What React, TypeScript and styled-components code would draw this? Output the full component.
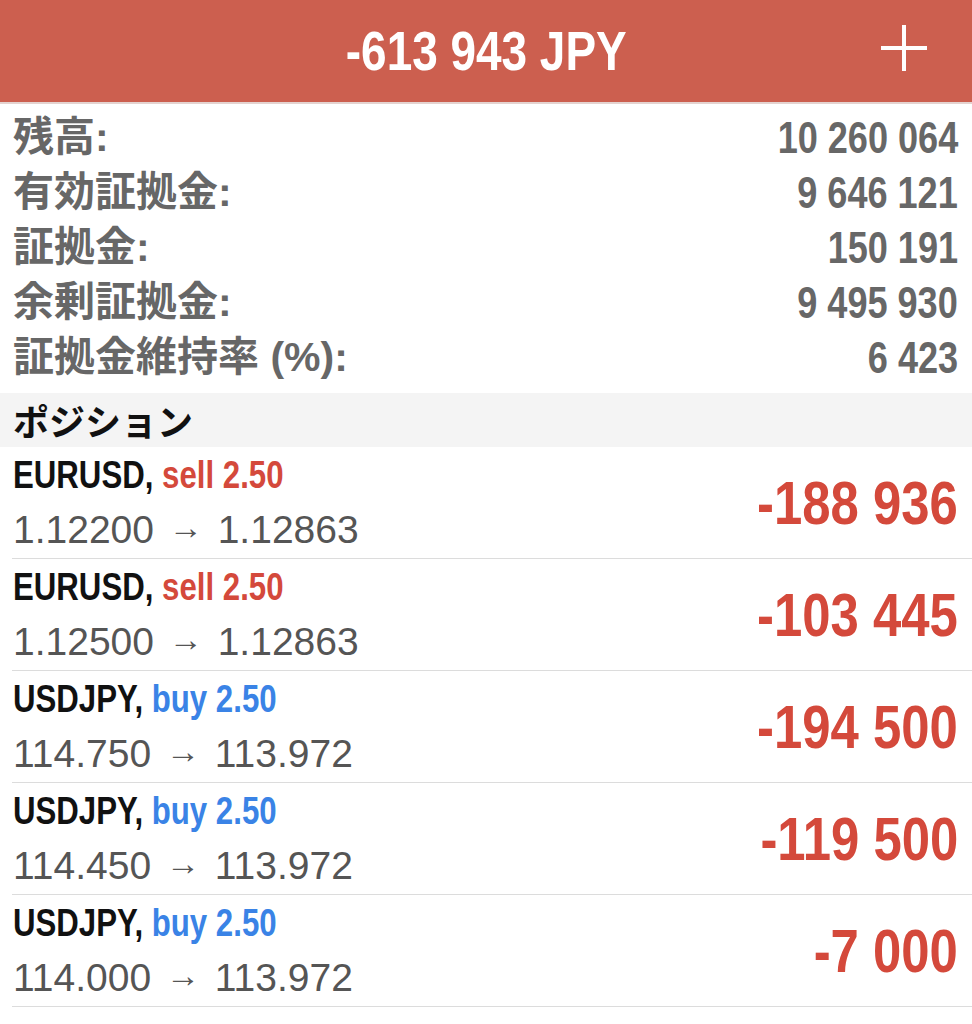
import styled, { createGlobalStyle } from "styled-components";

const GlobalStyle = createGlobalStyle`
  body {
    margin: 0;
    background: #fff;
    font-family: "Liberation Sans", "Noto Sans CJK JP", sans-serif;
  }
`;

const summary = [
  { label: "残高:", value: "10 260 064" },
  { label: "有効証拠金:", value: "9 646 121" },
  { label: "証拠金:", value: "150 191" },
  { label: "余剰証拠金:", value: "9 495 930" },
  { label: "証拠金維持率 (%):", value: "6 423" },
];

type Side = "sell" | "buy";

const positions: { symbol: string; side: Side; open: string; current: string; profit: string }[] = [
  { symbol: "EURUSD", side: "sell", open: "1.12200", current: "1.12863", profit: "-188 936" },
  { symbol: "EURUSD", side: "sell", open: "1.12500", current: "1.12863", profit: "-103 445" },
  { symbol: "USDJPY", side: "buy", open: "114.750", current: "113.972", profit: "-194 500" },
  { symbol: "USDJPY", side: "buy", open: "114.450", current: "113.972", profit: "-119 500" },
  { symbol: "USDJPY", side: "buy", open: "114.000", current: "113.972", profit: "-7 000" },
];

// the app draws its bold figures in a condensed face; no condensed face is installed,
// so squeeze Liberation Sans Bold instead
const Condensed = styled.span<{ $origin?: string; $scale?: number }>`
  display: inline-block;
  white-space: nowrap;
  font-family: "Liberation Sans", sans-serif;
  font-weight: 700;
  transform: scaleX(${(p) => p.$scale ?? 0.82});
  transform-origin: ${(p) => p.$origin ?? "left"} center;
`;

const Screen = styled.div`
  width: 972px;
  min-height: 1024px;
  background: #fff;
`;

const Header = styled.header`
  height: 102px;
  background: #cc5f4f;
  border-bottom: 2px solid #e4d3d0;
  display: grid;
  grid-template-columns: 1fr auto 1fr;
  align-items: center;
`;

const Title = styled.h1`
  grid-column: 2;
  margin: 0;
  font-size: 56px;
  line-height: 102px;
  color: #fff;
`;

const AddButton = styled.button`
  grid-column: 3;
  justify-self: end;
  align-self: start;
  margin: 25px 45px 0 0;
  padding: 0;
  border: 0;
  background: none;
  width: 46px;
  height: 46px;
  display: flex;
`;

const Summary = styled.dl`
  margin: 0;
  padding: 6px 14px 8px 13px;
`;

const SummaryRow = styled.div`
  display: flex;
  justify-content: space-between;
  align-items: center;
  height: 55px;
  color: #676767;
  font-weight: 700;
`;

const Label = styled.dt`
  font-size: 41px;
  line-height: 55px;
`;

const Amount = styled.dd`
  margin: 0;
  font-size: 44px;
  line-height: 55px;
`;

const SectionHeader = styled.h2`
  margin: 0;
  height: 54px;
  padding-left: 13px;
  background: #f4f4f4;
  display: flex;
  align-items: center;
  font-family: "Noto Sans CJK JP", sans-serif;
  font-weight: 700;
  font-size: 36px;
  color: #111;
`;

const PositionList = styled.ul`
  list-style: none;
  margin: 0;
  padding: 0 0 0 12px;
`;

const PositionRow = styled.li`
  height: 111px;
  border-bottom: 1px solid #dcdcdc;
  padding: 0 14px 0 1px;
  display: flex;
  justify-content: space-between;
  align-items: center;
`;

const PositionInfo = styled.div`
  display: flex;
  flex-direction: column;
  gap: 4px;
`;

const Deal = styled.div`
  font-size: 39px;
  line-height: 48px;
  color: #111;
`;

const SideLabel = styled.span<{ $side: Side }>`
  color: ${(p) => (p.$side === "sell" ? "#d4493b" : "#3a83e6")};
`;

const Prices = styled.div`
  font-size: 39px;
  line-height: 48px;
  color: #555;
`;

const Arrow = styled.span`
  font-size: 34px;
  margin: 0 4px;
  vertical-align: 4px;
`;

const Profit = styled.div`
  font-size: 62px;
  color: #d4493b;
`;

function PlusIcon() {
  return (
    <svg width="46" height="46" viewBox="0 0 46 46">
      <path d="M23 0v46M0 23h46" stroke="#fff" strokeWidth="4" fill="none" />
    </svg>
  );
}

export default function App() {
  return (
    <Screen>
      <GlobalStyle />
      <Header>
        <Title>
          <Condensed $origin="center">-613 943 JPY</Condensed>
        </Title>
        <AddButton aria-label="add">
          <PlusIcon />
        </AddButton>
      </Header>
      <Summary>
        {summary.map((row) => (
          <SummaryRow key={row.label}>
            <Label>{row.label}</Label>
            <Amount>
              <Condensed $origin="right">{row.value}</Condensed>
            </Amount>
          </SummaryRow>
        ))}
      </Summary>
      <SectionHeader>ポジション</SectionHeader>
      <PositionList>
        {positions.map((p, i) => (
          <PositionRow key={i}>
            <PositionInfo>
              <Deal>
                <Condensed $scale={0.8}>
                  {p.symbol}, <SideLabel $side={p.side}>{p.side} 2.50</SideLabel>
                </Condensed>
              </Deal>
              <Prices>
                {p.open} <Arrow>→</Arrow> {p.current}
              </Prices>
            </PositionInfo>
            <Profit>
              <Condensed $origin="right">{p.profit}</Condensed>
            </Profit>
          </PositionRow>
        ))}
      </PositionList>
    </Screen>
  );
}
